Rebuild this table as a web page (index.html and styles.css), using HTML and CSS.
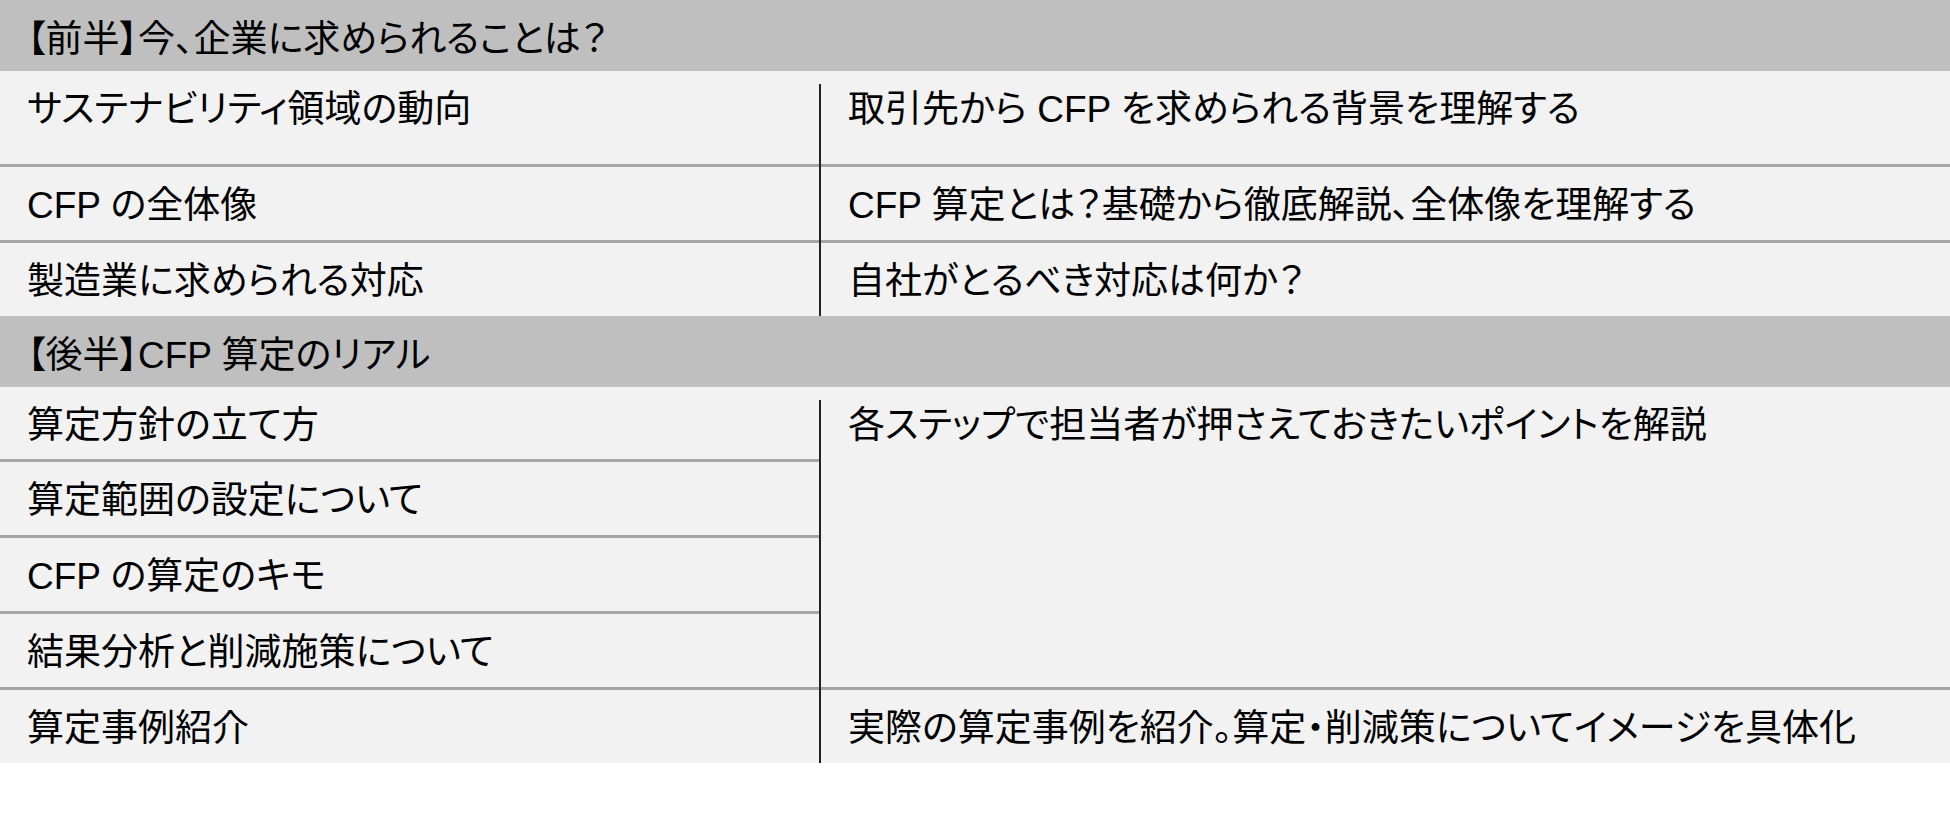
FILE: index.html
```html
<!DOCTYPE html>
<html lang="ja">
<head>
<meta charset="utf-8">
<title>CFP セミナー概要</title>
<link rel="stylesheet" href="styles.css">
</head>
<body>
<div class="agenda">
  <div class="sec-head">【前半】今、企業に求められることは？</div>
  <div class="sec-body">
    <div class="cell left tall line">サステナビリティ領域の動向</div>
    <div class="divider rows-3"></div>
    <div class="cell right tall line">取引先から CFP を求められる背景を理解する</div>
    <div class="cell left line">CFP の全体像</div>
    <div class="cell right line">CFP 算定とは？基礎から徹底解説、全体像を理解する</div>
    <div class="cell left">製造業に求められる対応</div>
    <div class="cell right">自社がとるべき対応は何か？</div>
  </div>
  <div class="sec-head">【後半】CFP 算定のリアル</div>
  <div class="sec-body">
    <div class="cell left line">算定方針の立て方</div>
    <div class="divider rows-5"></div>
    <div class="cell right span-4 line">各ステップで担当者が押さえておきたいポイントを解説</div>
    <div class="cell left line">算定範囲の設定について</div>
    <div class="cell left line">CFP の算定のキモ</div>
    <div class="cell left line">結果分析と削減施策について</div>
    <div class="cell left">算定事例紹介</div>
    <div class="cell right">実際の算定事例を紹介。算定・削減策についてイメージを具体化</div>
  </div>
</div>
</body>
</html>
```

FILE: styles.css
```css
* { box-sizing: border-box; }

html, body {
  margin: 0;
  padding: 0;
  background: #ffffff;
}

body {
  font-family: "Liberation Sans", "Noto Sans CJK JP", sans-serif;
  font-size: 37px;
  line-height: 40px;
  color: #000000;
  font-feature-settings: "palt";
}

.agenda {
  width: 1950px;
}

.sec-head {
  background: #bfbfbf;
  height: 71px;
  padding: 20px 0 0 27px;
  white-space: nowrap;
}

.sec-body {
  background: #f2f2f2;
  display: grid;
  grid-template-columns: 819px 2px 1fr;
}

.cell {
  padding: 19px 0 13.8px 27px;
  white-space: nowrap;
}

.cell.tall {
  padding-bottom: 34px;
}

.cell.line {
  border-bottom: 3px solid #a6a6a6;
}

.left {
  grid-column: 1;
}

.right {
  grid-column: 3;
}

.right.span-4 {
  grid-row: span 4;
}

.divider {
  grid-column: 2;
  margin-top: 13px;
  background: #222222;
}

.divider.rows-3 {
  grid-row: 1 / span 3;
}

.divider.rows-5 {
  grid-row: 1 / span 5;
}
```
